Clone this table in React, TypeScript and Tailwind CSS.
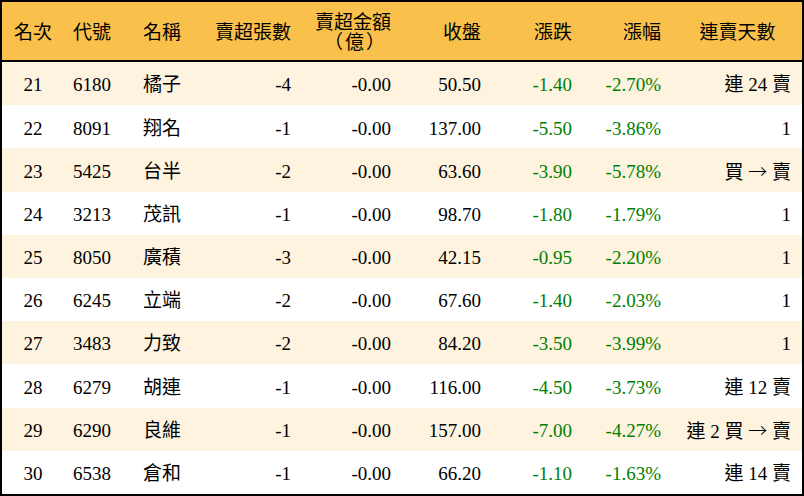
import * as React from "react";

type Row = {
    rank: number;
    code: string;
    name: string;
    shares: string;
    amount: string;
    close: string;
    change: string;
    pct: string;
    streak: string;
};

const rows: Row[] = [
    { rank: 21, code: "6180", name: "橘子", shares: "-4", amount: "-0.00", close: "50.50", change: "-1.40", pct: "-2.70%", streak: "連 24 賣" },
    { rank: 22, code: "8091", name: "翔名", shares: "-1", amount: "-0.00", close: "137.00", change: "-5.50", pct: "-3.86%", streak: "1" },
    { rank: 23, code: "5425", name: "台半", shares: "-2", amount: "-0.00", close: "63.60", change: "-3.90", pct: "-5.78%", streak: "買 → 賣" },
    { rank: 24, code: "3213", name: "茂訊", shares: "-1", amount: "-0.00", close: "98.70", change: "-1.80", pct: "-1.79%", streak: "1" },
    { rank: 25, code: "8050", name: "廣積", shares: "-3", amount: "-0.00", close: "42.15", change: "-0.95", pct: "-2.20%", streak: "1" },
    { rank: 26, code: "6245", name: "立端", shares: "-2", amount: "-0.00", close: "67.60", change: "-1.40", pct: "-2.03%", streak: "1" },
    { rank: 27, code: "3483", name: "力致", shares: "-2", amount: "-0.00", close: "84.20", change: "-3.50", pct: "-3.99%", streak: "1" },
    { rank: 28, code: "6279", name: "胡連", shares: "-1", amount: "-0.00", close: "116.00", change: "-4.50", pct: "-3.73%", streak: "連 12 賣" },
    { rank: 29, code: "6290", name: "良維", shares: "-1", amount: "-0.00", close: "157.00", change: "-7.00", pct: "-4.27%", streak: "連 2 買 → 賣" },
    { rank: 30, code: "6538", name: "倉和", shares: "-1", amount: "-0.00", close: "66.20", change: "-1.10", pct: "-1.63%", streak: "連 14 賣" },
];

const cols = "grid grid-cols-[62px_56px_84px_99px_100px_90px_91px_89px_129px]";

// 箭頭用 CJK 字型顯示較長的樣式
const Streak = ({ text }: { text: string }) => {
    const parts = text.split("→");
    if (parts.length === 1) return <>{text}</>;
    return (
        <>
            {parts[0]}
            <span className="font-['Noto_Sans_CJK_TC',sans-serif] font-light">→</span>
            {parts[1]}
        </>
    );
};

export default function App() {
    return (
        <div className="w-[804px] h-[496px] bg-white border-2 border-black font-['Liberation_Serif','Noto_Sans_CJK_TC',serif] text-[19px] text-black">
            {/* 表頭 */}
            <div className={`${cols} h-[60px] pt-[3px] bg-[#f9c04c] border-b-2 border-black items-center leading-[19px]`}>
                <div className="text-center">名次</div>
                <div className="text-center">代號</div>
                <div className="text-center">名稱</div>
                <div className="text-right pr-3">賣超張數</div>
                <div className="text-right pr-3 flex flex-col items-end">
                    <span>賣超金額</span>
                    <span className="pr-[4px] mt-[1px] tracking-[2px]">（億）</span>
                </div>
                <div className="text-right pr-3">收盤</div>
                <div className="text-right pr-3">漲跌</div>
                <div className="text-right pr-3">漲幅</div>
                <div className="text-center">連賣天數</div>
            </div>

            {rows.map((r, i) => (
                <div
                    key={r.rank}
                    className={`${cols} h-[43.2px] pt-[4px] items-center ${i % 2 === 0 ? "bg-[#fdf3df]" : "bg-white"}`}
                >
                    <div className="text-center">{r.rank}</div>
                    <div className="text-center">{r.code}</div>
                    <div className="text-center">{r.name}</div>
                    <div className="text-right pr-3">{r.shares}</div>
                    <div className="text-right pr-3">{r.amount}</div>
                    <div className="text-right pr-3">{r.close}</div>
                    <div className="text-right pr-3 text-[#008000]">{r.change}</div>
                    <div className="text-right pr-3 text-[#008000]">{r.pct}</div>
                    <div className="text-right pr-[11px] whitespace-pre">
                        <Streak text={r.streak} />
                    </div>
                </div>
            ))}
        </div>
    );
}
